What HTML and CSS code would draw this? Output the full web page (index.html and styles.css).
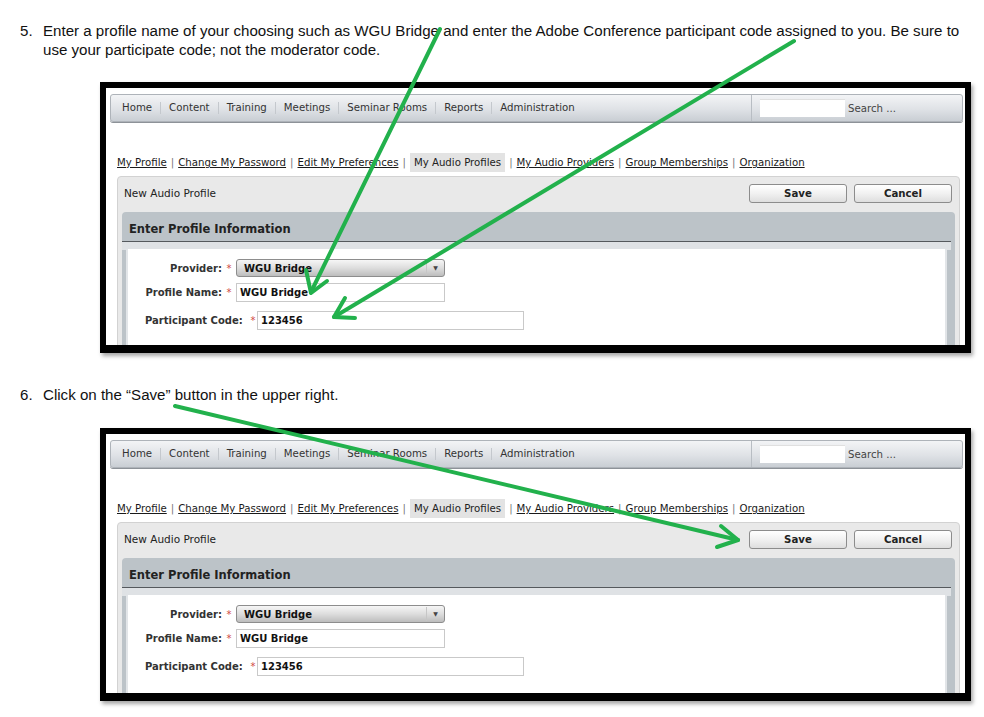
FILE: index.html
```html
<!DOCTYPE html>
<html>
<head>
<meta charset="utf-8">
<title>Audio Profile instructions</title>
<link rel="stylesheet" href="styles.css">
</head>
<body>
<div class="page">
  <p class="step step-5"><span class="num">5.</span><span class="txt">Enter a profile name of your choosing such as WGU Bridge and enter the Adobe Conference participant code assigned to you. Be sure to<br>use your participate code; not the moderator code.</span></p>

  <div class="shot">
    <div class="nav">
      <ul class="menu">
        <li>Home</li><li>Content</li><li>Training</li><li>Meetings</li><li>Seminar Rooms</li><li>Reports</li><li>Administration</li>
      </ul>
      <div class="search"><span class="search-box"></span><span class="search-label">Search ...</span></div>
    </div>
    <div class="links">
      <a>My Profile</a><span class="sep">|</span><a>Change My Password</a><span class="sep">|</span><a>Edit My Preferences</a><span class="sep">|</span><span class="tab">My Audio Profiles</span><span class="sep">|</span><a>My Audio Providers</a><span class="sep">|</span><a>Group Memberships</a><span class="sep">|</span><a>Organization</a>
    </div>
    <div class="panel">
      <div class="panel-head">
        <span class="title">New Audio Profile</span>
        <div class="btns"><span class="btn">Save</span><span class="btn">Cancel</span></div>
      </div>
      <div class="section">
        <div class="section-head">Enter Profile Information</div>
        <div class="section-body">
          <div class="form">
            <div class="row row-sel"><span class="lbl">Provider:</span><span class="star">*</span><span class="select"><span class="val">WGU Bridge</span><span class="drop">&#9660;</span></span></div>
            <div class="row row-name"><span class="lbl">Profile Name:</span><span class="star">*</span><span class="input">WGU Bridge</span></div>
            <div class="row row-code"><span class="lbl lbl-left">Participant Code:</span><span class="star star-narrow">*</span><span class="input input-wide">123456</span></div>
          </div>
        </div>
      </div>
    </div>
  </div>

  <p class="step step-6"><span class="num">6.</span><span class="txt">Click on the “Save” button in the upper right.</span></p>

  <div class="shot shot-2">
    <div class="nav">
      <ul class="menu">
        <li>Home</li><li>Content</li><li>Training</li><li>Meetings</li><li>Seminar Rooms</li><li>Reports</li><li>Administration</li>
      </ul>
      <div class="search"><span class="search-box"></span><span class="search-label">Search ...</span></div>
    </div>
    <div class="links">
      <a>My Profile</a><span class="sep">|</span><a>Change My Password</a><span class="sep">|</span><a>Edit My Preferences</a><span class="sep">|</span><span class="tab">My Audio Profiles</span><span class="sep">|</span><a>My Audio Providers</a><span class="sep">|</span><a>Group Memberships</a><span class="sep">|</span><a>Organization</a>
    </div>
    <div class="panel">
      <div class="panel-head">
        <span class="title">New Audio Profile</span>
        <div class="btns"><span class="btn">Save</span><span class="btn">Cancel</span></div>
      </div>
      <div class="section">
        <div class="section-head">Enter Profile Information</div>
        <div class="section-body">
          <div class="form">
            <div class="row row-sel"><span class="lbl">Provider:</span><span class="star">*</span><span class="select"><span class="val">WGU Bridge</span><span class="drop">&#9660;</span></span></div>
            <div class="row row-name"><span class="lbl">Profile Name:</span><span class="star">*</span><span class="input">WGU Bridge</span></div>
            <div class="row row-code"><span class="lbl lbl-left">Participant Code:</span><span class="star star-narrow">*</span><span class="input input-wide">123456</span></div>
          </div>
        </div>
      </div>
    </div>
  </div>

  <svg class="arrows" width="984" height="717" viewBox="0 0 984 717">
    <g fill="none" stroke="#22b14c" stroke-width="4" stroke-linecap="round" stroke-linejoin="round">
      <path d="M440 29 L311 292"/>
      <path d="M327 281 L311 293 L306 270"/>
      <path d="M794 41 L334 317"/>
      <path d="M355 318 L334 317 L345 298"/>
      <path d="M175 406 L738 540"/>
      <path d="M721 526 L738 540 L717 547"/>
    </g>
  </svg>
</div>
</body>
</html>
```
FILE: styles.css
```css
* { box-sizing: border-box; }
html, body { margin: 0; padding: 0; background: #fff; }
body { width: 984px; height: 717px; overflow: hidden; }

.page {
  position: relative;
  width: 984px;
  height: 717px;
  padding-top: 21px;
}

.step {
  margin: 0;
  display: flex;
  font-family: "Liberation Sans", Arial, sans-serif;
  font-size: 15.1px;
  line-height: 19px;
  color: #111;
  white-space: nowrap;
}
.step .num { width: 23px; padding-left: 20px; box-sizing: content-box; }
.step-6 { margin-top: 32px; }

.shot {
  margin: 23px 0 0 100px;
  width: 871px;
  height: 271px;
  border: solid #000;
  border-width: 6px 6px 8px 6px;
  background: #fff;
  overflow: hidden;
  box-shadow: 2px 3px 4px rgba(0,0,0,0.35);
  font-family: "DejaVu Sans", Verdana, sans-serif;
  font-size: 10.2px;
  color: #222;
}
.shot-2 { margin-top: 24px; height: 273px; }

/* nav */
.nav {
  margin: 6px 2px 0 4px;
  height: 28px;
  display: flex;
  align-items: center;
  border: 1px solid #aeb3b9;
  border-radius: 3px;
  background: linear-gradient(#f3f4f6, #dfe2e6 55%, #c9ced4);
  box-shadow: 0 1px 0 #8d9298;
}
.menu {
  list-style: none;
  margin: 0;
  padding: 0 0 0 11px;
  display: flex;
  flex: 1;
  color: #333;
}
.menu li { padding: 0 8px; line-height: 12px; }
.menu li:first-child { padding-left: 0; }
.menu li + li { border-left: 1px solid #c4c8cd; }
.search {
  width: 211px;
  height: 100%;
  display: flex;
  align-items: center;
  border-left: 1px solid #b8bdc3;
  padding-left: 8px;
}
.search-box {
  width: 85px;
  height: 18px;
  background: #fff;
  border-top: 1px solid #e0e0e0;
}
.search-label { margin-left: 3px; color: #444; }

/* links */
.links {
  margin-top: 31px;
  padding-left: 11px;
  height: 19px;
  display: flex;
  align-items: center;
  line-height: 19px;
  white-space: nowrap;
}
.links a { color: #1a1a1a; text-decoration: underline; }
.links .sep { color: #777; padding: 0 4px; }
.links .tab { background: #e3e3e3; padding: 0 4px; color: #222; }

/* panel */
.panel {
  margin: 4px 5px 0 11px;
  border: 1px solid #d2d2d2;
  border-radius: 4px 4px 0 0;
  background: #e9e9e9;
  padding: 0 4px 0 4px;
  height: 300px;
}
.panel-head {
  display: flex;
  align-items: center;
  justify-content: space-between;
  padding: 7px 3px 9px 2px;
  height: 35px;
}
.title { font-size: 10.5px; color: #222; margin-top: -2px; }
.btns { display: flex; gap: 7px; }
.btn {
  width: 98px;
  height: 19px;
  border: 1px solid #8c8c8c;
  border-radius: 3px;
  background: linear-gradient(#ffffff, #f1f1f1 50%, #dedede);
  font-weight: bold;
  color: #222;
  display: flex;
  align-items: center;
  justify-content: center;
}

/* section */
.section {
  background: #bcc3c8;
  border-radius: 4px 4px 0 0;
  height: 260px;
}
.section-head {
  padding: 9px 7px 4px;
  line-height: 16px;
  font-weight: bold;
  font-size: 11.5px;
  color: #222;
  border-bottom: 1px solid #55595d;
  margin-right: 4px;
}
.section-body {
  border-top: 8px solid #dfe2e5;
  margin-right: 4px;
  padding: 0 4px 0 4px;
  height: 200px;
  background: #bcc3c8;
}
.form {
  background: #fff;
  border: solid #e2e5e8;
  border-width: 0 2px;
  height: 200px;
  padding-top: 10px;
  margin-top: -1px;
}
.row { display: flex; align-items: center; font-weight: bold; font-size: 10px; }
.row-name { margin-top: 6px; }
.row-code { margin-top: 9px; }
.lbl { width: 94px; text-align: right; color: #333; }
.lbl-left { width: 121px; text-align: left; padding-left: 17px; }
.star { width: 14px; text-align: center; color: #d04545; font-weight: normal; }
.star-narrow { width: 8px; }
.select {
  width: 209px;
  height: 18px;
  border: 1px solid #8d8d8d;
  border-radius: 3px;
  background: linear-gradient(#f6f6f6, #dddddd 50%, #bdbdbd);
  display: flex;
  align-items: center;
  justify-content: space-between;
  color: #111;
}
.select .val { padding-left: 7px; }
.select .drop {
  font-size: 6px;
  width: 18px;
  text-align: center;
  color: #444;
  border-left: 1px solid #c6c6c6;
  line-height: 14px;
}
.input {
  width: 209px;
  height: 19px;
  border: 1px solid #c9c9c9;
  background: #fff;
  padding-left: 3px;
  display: flex;
  align-items: center;
  color: #111;
}
.input-wide { width: 267px; }

/* annotation arrows */
.arrows {
  position: absolute;
  top: 0;
  left: 0;
  pointer-events: none;
}
```
